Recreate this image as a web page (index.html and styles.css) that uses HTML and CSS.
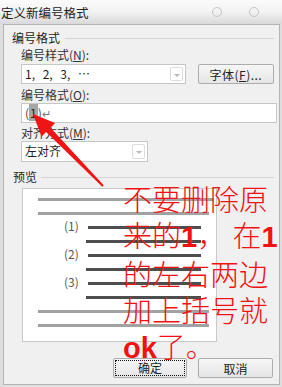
FILE: index.html
```html
<!DOCTYPE html>
<html lang="zh-CN">

<head>
    <meta charset="UTF-8">
    <meta name="viewport" content="width=device-width, initial-scale=1.0">
    <title>定义新编号格式</title>
    <link rel="stylesheet" href="styles.css">
</head>

<body>
    <div class="titlebar">
        <span class="title">定义新编号格式</span>
        <span class="wbtn"></span>
        <span class="wbtn"></span>
    </div>
    <div class="dialog">
        <div class="legend"><span>编号格式</span><i class="rule"></i></div>
        <div class="field">
            <div class="label">编号样式(<u>N</u>):</div>
            <div class="row">
                <div class="combo combo-style">
                    <span class="combo-text list-text">1, 2, 3, ⋯</span>
                    <span class="drop"></span>
                </div>
                <button class="btn btn-font">字体(<u>F</u>)...</button>
            </div>
            <div class="label label-gap">编号格式(<u>O</u>):</div>
            <div class="input">(<span class="sel">1</span>)<span class="ret">↵</span></div>
            <div class="label label-gap2">对齐方式(<u>M</u>):</div>
            <div class="combo combo-align">
                <span class="combo-text">左对齐</span>
                <span class="drop"></span>
            </div>
        </div>
        <div class="legend legend-preview"><span>预览</span><i class="rule"></i></div>
        <div class="preview">
            <div class="pline"><i class="bar gray wide"></i></div>
            <div class="pline"><i class="bar gray"></i></div>
            <div class="pline"><span class="num">(1)</span><i class="bar dark"></i></div>
            <div class="pline"><i class="bar dark cont"></i></div>
            <div class="pline"><span class="num">(2)</span><i class="bar dark"></i></div>
            <div class="pline"><i class="bar dark cont"></i></div>
            <div class="pline"><span class="num">(3)</span><i class="bar dark"></i></div>
            <div class="pline"><i class="bar dark cont"></i></div>
            <div class="pline"><i class="bar gray"></i></div>
            <div class="pline"><i class="bar gray"></i></div>
        </div>
        <div class="actions">
            <button class="btn btn-ok"><span class="focus">确定</span></button>
            <button class="btn btn-cancel">取消</button>
        </div>
    </div>

    <!-- 标注 -->
    <svg class="arrow" width="282" height="387" viewBox="0 0 282 387">
        <polygon points="33,114 55,123 50.5,127.7 103.7,185.3 102.3,186.7 46.1,131.9 41.5,136.5" fill="#f01414" />
    </svg>
    <div class="note">不要删除原<br>来的<b>1</b>，&nbsp;在<b>1</b><br>的左右两边<br>加上括号就<br><b>ok</b>了。</div>
</body>

</html>
```

FILE: styles.css
```css
* {
    margin: 0;
    padding: 0;
    box-sizing: border-box;
}

body {
    width: 282px;
    height: 387px;
    overflow: hidden;
    position: relative;
    background-color: #dedede;
    font-family: "Noto Sans CJK SC", "Noto Sans", sans-serif;
    font-size: 12px;
    color: #1e1e1e;
}

u {
    text-decoration: underline;
}

.titlebar {
    height: 24px;
    display: flex;
    align-items: center;
    padding: 2px 23px 0 1px;
    background: linear-gradient(#fbfbfb 0, #f2f2f2 50%, #d9d9d9 100%);
}

.title {
    font-size: 12.5px;
    line-height: 20px;
    color: #222;
}

.wbtn {
    width: 10px;
    height: 10px;
    border: 1px solid #c4c4c4;
    border-radius: 50%;
    margin-top: -3px;
}

.wbtn:nth-of-type(2) {
    margin-left: auto;
}

.wbtn:nth-of-type(3) {
    margin-left: 27px;
}

.dialog {
    margin-left: 3px;
    width: 277px;
    height: 361px;
    border: 1px solid #b4b4b4;
    background-color: #f0f0f0;
    padding: 6px 5px 0 4px;
}

.legend {
    display: flex;
    align-items: center;
    padding-left: 4px;
    line-height: 14px;
}

.legend .rule {
    flex: 1;
    height: 1px;
    margin-left: 5px;
    background-color: #d4d4d4;
}

.legend-preview {
    margin-top: 8px;
    padding-left: 5px;
}

.legend-preview .rule {
    margin-left: 4px;
}

.field {
    padding-left: 13px;
}

.label {
    margin-top: 3px;
    line-height: 14px;
    color: #333;
}

.label-gap {
    margin-top: 4px;
}

.row {
    display: flex;
    margin-top: 2px;
}

.combo {
    display: flex;
    height: 20px;
    border: 1px solid #c6c6c6;
    background-color: #fff;
    padding: 2px;
}

.combo-style {
    width: 166px;
}

.combo-align {
    width: 127px;
    height: 21px;
    margin-top: 1px;
}

.combo-text {
    flex: 1;
    line-height: 14px;
    padding-left: 1px;
}

.list-text {
    word-spacing: 5px;
}

.drop {
    width: 13px;
    border: 1px solid #dcdcdc;
    border-radius: 2px;
    position: relative;
}

.drop::after {
    content: "";
    position: absolute;
    left: 3px;
    top: 6px;
    border-left: 3px solid transparent;
    border-right: 3px solid transparent;
    border-top: 3px solid #b8b8b8;
}

.btn {
    font-family: inherit;
    font-size: 12px;
    color: #222;
    height: 20px;
    border: 1px solid #acacac;
    border-radius: 2px;
    background: linear-gradient(#f6f6f6, #e6e6e6);
}

.btn-font {
    width: 77px;
    margin-left: 12px;
    letter-spacing: 0.5px;
}

.input {
    margin-top: 1px;
    width: 256px;
    height: 20px;
    border: 1px solid #c6c6c6;
    background-color: #fff;
    padding: 2px 0 0 3px;
    line-height: 14px;
    color: #444;
}

.sel {
    background-color: #a6a6a6;
    color: #222;
    padding: 0 1px;
}

.ret {
    color: #777;
    font-size: 11px;
}

.preview {
    margin: 4px 0 0 14px;
    width: 195px;
    height: 154px;
    border: 1px solid #c8c8c8;
    background-color: #fff;
    padding-top: 3px;
}

.pline {
    height: 14px;
    display: flex;
    align-items: center;
}

.bar {
    height: 3px;
}

.gray {
    margin-left: 15px;
    width: 171px;
    background-color: #a2a2a2;
}

.gray.wide {
    width: 176px;
}

.num {
    margin-left: 41px;
    width: 24px;
    font-size: 12px;
    line-height: 14px;
    color: #555;
    margin-top: -2px;
}

.dark {
    width: 113px;
    background-color: #4e4e4e;
}

.dark.cont {
    margin-left: 63px;
    width: 115px;
}

.actions {
    display: flex;
    justify-content: flex-end;
    gap: 11px;
    margin-top: 16px;
    padding-right: 1px;
}

.btn-ok {
    width: 74px;
    padding: 1px;
}

.btn-ok .focus {
    display: block;
    height: 100%;
    border: 1px dotted #111;
    line-height: 14px;
}

.btn-cancel {
    width: 75px;
}

.arrow {
    position: absolute;
    left: 0;
    top: 0;
    pointer-events: none;
}

.note {
    position: absolute;
    left: 123px;
    top: 180px;
    width: 160px;
    font-size: 29px;
    font-weight: 300;
    line-height: 36px;
    color: #f21010;
}

.note b {
    font-family: "Liberation Sans", Arial, sans-serif;
    font-weight: bold;
}
```
